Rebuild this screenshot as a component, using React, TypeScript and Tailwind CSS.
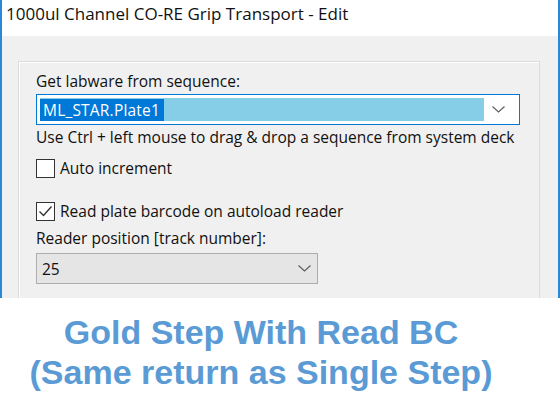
const Chevron = () => (
  <svg width="13" height="7" viewBox="0 0 13 7" fill="none">
    <path d="M0.5 0.5 L6.5 6 L12.5 0.5" stroke="#5f5f5f" strokeWidth="1.2" />
  </svg>
);

const Checkbox = ({ checked }: { checked?: boolean }) => (
  <div className="w-[19px] h-[19px] border border-[#333] bg-white flex items-center justify-center shrink-0">
    {checked && (
      <svg width="15" height="13" viewBox="0 0 15 13" fill="none">
        <path d="M1.5 6.5 L5.5 10.5 L13.5 1.5" stroke="#333" strokeWidth="1.4" />
      </svg>
    )}
  </div>
);

const App = () => {
  return (
    <div className="w-[560px] h-[416px] bg-white overflow-hidden flex flex-col">
      {/* Dialog window, cut off at the bottom */}
      <div className="h-[298px] shrink-0 border-x-2 border-[#2b88d8] flex flex-col font-['Open_Sans',sans-serif] text-[#111] overflow-hidden">
        <div className="h-[36px] shrink-0 bg-white px-1 pt-[4px] text-[17px] leading-[20px]">1000ul Channel CO-RE Grip Transport - Edit</div>
        <div className="flex-1 bg-[#f0f0f0] pt-[25px] pl-4 pr-[18px] overflow-hidden">
          <div className="h-[260px] border border-[#dcdcdc] shadow-[inset_1px_1px_0_#fff] pl-[17px] pr-[19px] pt-[9px] text-[15.5px] leading-[20px]">
            <div>Get labware from sequence:</div>
            <div className="mt-[3px] h-[31px] border border-[#0078d7] bg-white flex items-center pl-[3px] pr-[6px]">
              <div className="h-[23px] flex-1 bg-[#86cde8] flex items-center">
                <span className="bg-[#0078d7] text-white h-[22px] pl-[3px] pr-[4px] leading-[22px] tracking-[0.2px]">ML_STAR.Plate1</span>
              </div>
              <div className="w-[29px] flex justify-center">
                <Chevron />
              </div>
            </div>
            <div className="mt-[2px] whitespace-nowrap">Use Ctrl + left mouse to drag &amp; drop a sequence from system deck</div>
            <div className="mt-[11px] flex items-center gap-[5px]">
              <Checkbox />
              <span>Auto increment</span>
            </div>
            <div className="mt-[23px] flex items-center gap-[5px]">
              <Checkbox checked />
              <span>Read plate barcode on autoload reader</span>
            </div>
            <div className="mt-[7px]">Reader position [track number]:</div>
            <div className="mt-[5px] w-[282px] h-[31px] border border-[#adadad] bg-[#e5e5e5] flex items-center pl-[5px] pr-[6px]">
              <span className="flex-1">25</span>
              <Chevron />
            </div>
            <div className="mt-[10px]">Barcode mask:</div>
          </div>
        </div>
      </div>
      <div className="flex-1 flex flex-col items-center pt-[14px] pr-[38px] font-['Liberation_Sans',Arial,sans-serif] font-bold text-[34px] leading-[40px] text-[#5b9bd5] whitespace-nowrap">
        <div>Gold Step With Read BC</div>
        <div>(Same return as Single Step)</div>
      </div>
    </div>
  );
};

export default App;
